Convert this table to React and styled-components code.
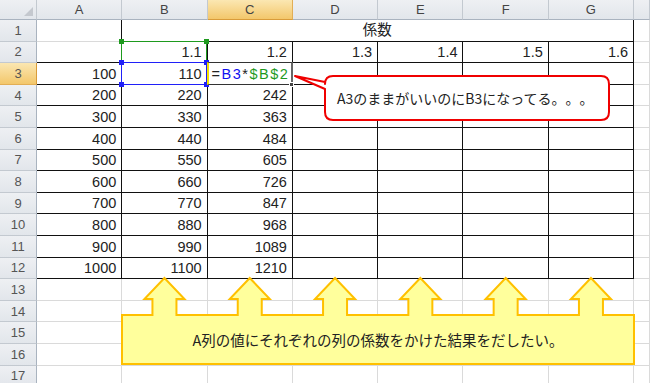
import React from 'react';
import styled, { createGlobalStyle } from 'styled-components';

const GlobalStyle = createGlobalStyle`
  html, body { margin: 0; padding: 0; background: #fff; overflow: hidden; }
  body { font-family: "Liberation Sans", "Noto Sans CJK JP", sans-serif; }
`;

const COLS = ['A', 'B', 'C', 'D', 'E', 'F', 'G', 'H'];
const HEAD_W = 37;
const HEAD_H = 20;
const COL_W = 85.3;
const ROW_H = 21.6;
const ROWS = 17;

const GREEN = '#1e9a1e';
const BLUE = '#2020f8';

const Sheet = styled.div`
  position: relative;
  width: 650px;
  height: 383px;
  overflow: hidden;
`;

const Grid = styled.div`
  display: grid;
  grid-template-columns: ${HEAD_W}px repeat(7, ${COL_W}px) 1fr;
  grid-template-rows: ${HEAD_H}px repeat(${ROWS}, ${ROW_H}px);
`;

const headBg = (active) =>
  active ? 'linear-gradient(#fbe7b2, #f3c76b)' : 'linear-gradient(#eef0f3, #e2e6eb)';

const Corner = styled.div`
  position: relative;
  box-sizing: border-box;
  background: ${headBg(false)};
  border-right: 1px solid #c3c9d0;
  border-bottom: 1px solid #a9b3bf;

  &::after {
    content: '';
    position: absolute;
    right: 3px;
    bottom: 3px;
    border-style: solid;
    border-width: 0 0 9px 9px;
    border-color: transparent transparent #c4c8ce transparent;
  }
`;

const ColHead = styled.div`
  box-sizing: border-box;
  display: flex;
  align-items: center;
  justify-content: center;
  background: ${(p) => headBg(p.$active)};
  border-right: 1px solid ${(p) => (p.$active ? '#e2ae55' : '#c3c9d0')};
  border-bottom: 1px solid ${(p) => (p.$active ? '#d99c3a' : '#a9b3bf')};
  color: #444;
  font-size: 13px;
`;

const RowHead = styled.div`
  box-sizing: border-box;
  display: flex;
  align-items: center;
  justify-content: center;
  background: ${(p) => headBg(p.$active)};
  border-right: 1px solid ${(p) => (p.$active ? '#d99c3a' : '#a9b3bf')};
  border-bottom: 1px solid ${(p) => (p.$active ? '#e2ae55' : '#c3c9d0')};
  color: #555;
  font-size: 13px;
`;

const Cell = styled.div`
  position: relative;
  box-sizing: border-box;
  grid-column: span ${(p) => p.$span || 1};
  display: flex;
  align-items: flex-end;
  justify-content: ${(p) => (p.$align === 'center' ? 'center' : p.$align === 'left' ? 'flex-start' : 'flex-end')};
  padding: 0 5px 2px 4px;
  border-right: 1px solid ${(p) => (p.$r ? '#111' : '#dadada')};
  border-bottom: 1px solid ${(p) => (p.$b ? '#111' : '#dadada')};
  font-size: 14.5px;
  color: #222;
  white-space: nowrap;
  ${(p) => (p.$raise ? 'z-index: 2;' : '')}
`;

const JpText = styled.span`
  font-family: "Noto Sans CJK JP", sans-serif;
  font-size: 14.5px;
`;

const Formula = styled.span`
  letter-spacing: 1.5px;
  color: #222;
`;

const Ref = styled.span`
  color: ${(p) => p.$color};
`;

/* coloured reference outline drawn over a cell's own border */
const RefFrame = styled.div`
  position: absolute;
  inset: -1px 0 -1px -1px;
  border: 1px solid ${(p) => p.$color};
  pointer-events: none;
`;

const EditFrame = styled.div`
  position: absolute;
  inset: -1px -1px -1px -1px;
  border: 1px solid #333;
  border-right: 2px solid #666;
  border-left: 2px solid #f2e200;
  pointer-events: none;
`;

const Knob = styled.span`
  position: absolute;
  width: 5px;
  height: 5px;
  box-sizing: border-box;
  background: ${(p) => p.$color};
  border: ${(p) => (p.$outline ? '1px solid #fff' : 'none')};
  ${(p) => (p.$top ? 'top: -3px;' : 'bottom: -3px;')}
  ${(p) => (p.$left ? 'left: -3px;' : 'right: -3px;')}
`;

const Callout = styled.div`
  position: absolute;
  left: ${(p) => p.$x}px;
  top: ${(p) => p.$y}px;
  width: ${(p) => p.$w}px;
  height: ${(p) => p.$h}px;
  box-sizing: border-box;
  display: flex;
  align-items: center;
  justify-content: ${(p) => (p.$center ? 'center' : 'flex-start')};
  padding: ${(p) => p.$pad};
  z-index: 3;
  font-family: "Noto Sans CJK JP", sans-serif;
  font-size: ${(p) => p.$size}px;
  color: #222;
  white-space: nowrap;
  text-spacing-trim: space-all;
`;

const Shape = styled.svg`
  position: absolute;
  overflow: visible;
  left: 0;
  top: 0;
  z-index: -1;
`;

const Label = styled.span`
  position: relative;
`;

// row 3..12 values for columns A, B, C
const data = [100, 200, 300, 400, 500, 600, 700, 800, 900, 1000].map((a) => [
  a,
  Math.round(a * 1.1),
  Math.round(a * 1.1 * 1.1),
]);

function Corners({ color }) {
  return (
    <>
      <Knob $top $left $color={color} />
      <Knob $top $color={color} />
      <Knob $left $color={color} />
      <Knob $color={color} />
    </>
  );
}

function buildRow(r) {
  const cells = [];
  if (r === 1) {
    cells.push(<Cell key="A" $r />);
    cells.push(
      <Cell key="B" $span={6} $r $b $align="center">
        <JpText>係数</JpText>
      </Cell>
    );
    cells.push(<Cell key="H" />);
    return cells;
  }
  if (r === 2) {
    cells.push(<Cell key="A" $r $b />);
    ['1.1', '1.2', '1.3', '1.4', '1.5', '1.6'].forEach((v, i) =>
      cells.push(
        <Cell key={v} $r $b $raise={i === 0}>
          {v}
          {i === 0 && (
            <RefFrame $color={GREEN}>
              <Corners color={GREEN} />
            </RefFrame>
          )}
        </Cell>
      )
    );
    cells.push(<Cell key="H" />);
    return cells;
  }
  if (r <= 12) {
    const [a, b, c] = data[r - 3];
    COLS.slice(0, 7).forEach((col, i) => {
      let content = null;
      let align;
      let frame = null;
      if (i === 0) content = a;
      if (i === 1) {
        content = b;
        if (r === 3)
          frame = (
            <RefFrame $color={BLUE}>
              <Corners color={BLUE} />
            </RefFrame>
          );
      }
      if (i === 2) {
        if (r === 3) {
          align = 'left';
          content = (
            <Formula>
              =<Ref $color="#1010f0">B3</Ref>*<Ref $color={GREEN}>$B$2</Ref>
            </Formula>
          );
          frame = (
            <EditFrame>
              <Knob $color="#444" $outline />
            </EditFrame>
          );
        } else content = c;
      }
      cells.push(
        <Cell key={col} $r $b $align={align} $raise={r === 3 && (i === 1 || i === 2)}>
          {content}
          {frame}
        </Cell>
      );
    });
    cells.push(<Cell key="H" />);
    return cells;
  }
  return COLS.map((col) => <Cell key={col} />);
}

// yellow callout: box 512x49 with six arrows pointing up at column centres B..G
function yellowPath() {
  const top = 37;
  let d = `M 0 ${top}`;
  [1, 2, 3, 4, 5, 6].forEach((i) => {
    const t = HEAD_W + COL_W * i + COL_W / 2 - 0.5 - 122;
    d += ` L ${t - 12} ${top} L ${t - 12} 21 L ${t - 20} 21 L ${t} 0 L ${t + 20} 21 L ${t + 12} 21 L ${t + 12} ${top}`;
  });
  d += ` L 512 ${top} L 512 86 L 0 86 Z`;
  return d;
}

// red callout: rounded box 284x44 with a tail pointing back to C3
const redPath =
  'M 38 0 H 306 Q 314 0 314 8 V 36 Q 314 44 306 44 H 38 Q 30 44 30 36 V 13 L 0 0 L 30 6 V 8 Q 30 0 38 0 Z';

export default function App() {
  return (
    <Sheet>
      <GlobalStyle />
      <Grid>
        <Corner />
        {COLS.map((c) => (
          <ColHead key={c} $active={c === 'C'}>
            {c === 'H' ? '' : c}
          </ColHead>
        ))}
        {Array.from({ length: ROWS }, (_, i) => i + 1).map((r) => (
          <React.Fragment key={r}>
            <RowHead $active={r === 3}>{r}</RowHead>
            {buildRow(r)}
          </React.Fragment>
        ))}
      </Grid>

      <Callout $x={295} $y={76} $w={314} $h={44} $size={14} $pad="0 0 0 42px">
        <Shape width="314" height="44">
          <path d={redPath} fill="#fff" stroke="#f00000" strokeWidth="2" strokeLinejoin="round" />
        </Shape>
        <Label>A3のままがいいのにB3になってる。。。</Label>
      </Callout>

      <Callout $x={122} $y={278} $w={512} $h={86} $size={14.5} $center $pad="37px 0 0 0">
        <Shape width="512" height="86">
          <path d={yellowPath()} fill="#ffff9c" stroke="#ffc000" strokeWidth="2" />
        </Shape>
        <Label>A列の値にそれぞれの列の係数をかけた結果をだしたい。</Label>
      </Callout>
    </Sheet>
  );
}
